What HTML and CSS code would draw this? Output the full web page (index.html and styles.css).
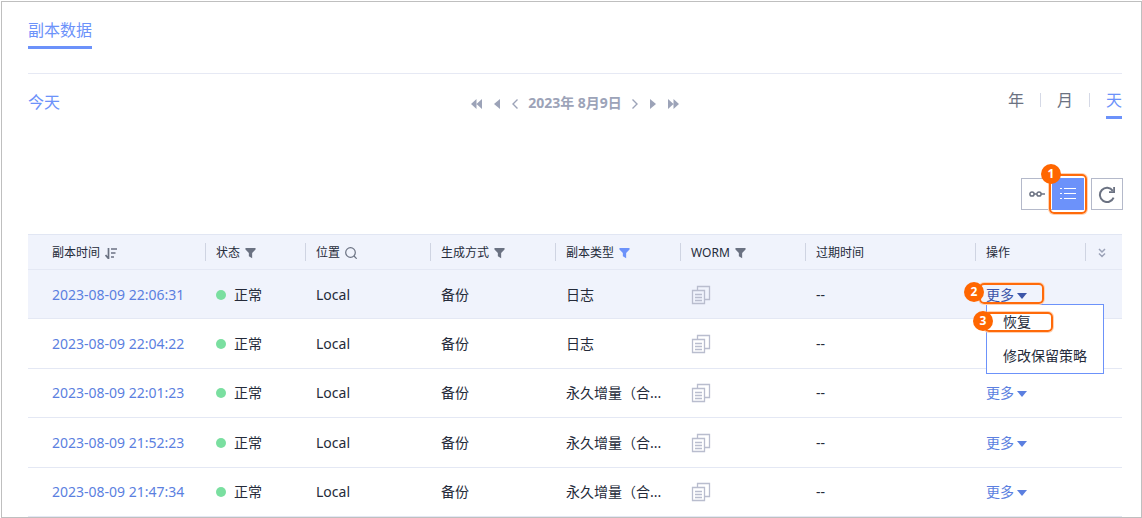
FILE: index.html
```html
<!DOCTYPE html>
<html lang="zh-CN">
<head>
<meta charset="utf-8">
<title>副本数据</title>
<meta name="viewport" content="width=device-width, initial-scale=1">
<link rel="stylesheet" href="styles.css">
</head>
<body>
<svg class="defs" width="0" height="0" aria-hidden="true">
  <symbol id="funnel" viewBox="0 0 12 12"><path d="M0.5 0.5h11v1.6L7.8 6v5.6L4.2 9.6V6L0.5 2.100z" fill="currentColor"/></symbol>
  <symbol id="copy" viewBox="0 0 20 20"><g fill="none" stroke="currentColor" stroke-width="1.3"><path d="M6.500 5.500V1.500h12v13h-5"/><path d="M1.500 5.500h12v13h-12z"/><path d="M4 9.500h7M4 12.500h7M4 15.500h7"/></g></symbol>
  <symbol id="caret" viewBox="0 0 10 6"><path d="M0 0h10L5 6z" fill="currentColor"/></symbol>
</svg>
<main class="page">
  <nav class="tabs"><a class="tab" href="#copies">副本数据</a></nav>

  <div class="calendar">
    <a class="today" href="#today">今天</a>
    <div class="datenav">
      <button class="step" aria-label="上一年"><svg width="11" height="10" viewBox="0 0 11 10"><path d="M5.500 0v10L0 5zM11 0v10L5.500 5z" fill="currentColor"/></svg></button>
      <button class="step" aria-label="上一月"><svg width="6" height="10" viewBox="0 0 6 10"><path d="M6 0v10L0 5z" fill="currentColor"/></svg></button>
      <button class="step" aria-label="前一天"><svg width="6" height="10" viewBox="0 0 6 10"><path d="M5.500 0.500L1 5l4.500 4.500" fill="none" stroke="currentColor" stroke-width="1.400"/></svg></button>
      <span class="date">2023年 8月9日</span>
      <button class="step" aria-label="后一天"><svg width="6" height="10" viewBox="0 0 6 10"><path d="M0.500 0.500L5 5 0.500 9.500" fill="none" stroke="currentColor" stroke-width="1.400"/></svg></button>
      <button class="step" aria-label="下一月"><svg width="6" height="10" viewBox="0 0 6 10"><path d="M0 0v10l6-5z" fill="currentColor"/></svg></button>
      <button class="step" aria-label="下一年"><svg width="11" height="10" viewBox="0 0 11 10"><path d="M0 0v10l5.500-5zM5.500 0v10L11 5z" fill="currentColor"/></svg></button>
    </div>
    <div class="range">
      <button class="unit">年</button>
      <button class="unit">月</button>
      <button class="unit unit-on">天</button>
    </div>
  </div>

  <div class="tools">
    <button class="tool tool-line" aria-label="时间轴视图"><svg width="16" height="8" viewBox="0 0 16 8"><g fill="none" stroke="#6b7282" stroke-width="1.500"><circle cx="3" cy="4" r="2.100"/><circle cx="10" cy="4" r="2.100"/><path d="M5.100 4h2.800M12.100 4H16"/></g></svg></button>
    <div class="mark-host">
      <button class="tool tool-on" aria-label="列表视图"><svg width="16" height="14" viewBox="0 0 16 14"><path d="M0 1.500h2M4 1.500h12M0 6.500h2M4 6.500h12M0 11.500h2M4 11.500h12" stroke="#fff" stroke-width="1.200"/></svg></button>
      <span class="ring ring-tool"></span><span class="badge badge-tool">1</span>
    </div>
    <button class="tool tool-refresh" aria-label="刷新"><svg width="18" height="18" viewBox="0 0 18 18"><path d="M14.800 5.800A7.100 7.100 0 1 0 15.600 12.600" fill="none" stroke="#6b7282" stroke-width="2"/><path d="M16.100 2v5.200H11" fill="none" stroke="#6b7282" stroke-width="1.800"/></svg></button>
  </div>

  <table class="grid" id="copies">
    <colgroup><col class="c-time"><col class="c-state"><col class="c-mid"><col class="c-mid"><col class="c-mid"><col class="c-mid"><col><col class="c-act"><col class="c-more"></colgroup>
    <thead>
      <tr>
        <th><div class="head">副本时间<svg width="12" height="12" viewBox="0 0 12 12"><g fill="none" stroke="currentColor"><path d="M3.500 1v11M0.500 8L3.500 11.500" stroke-width="1.700"/><path d="M6 2h6M6 6h4.500M6 10h3" stroke-width="1.700"/></g></svg></div></th>
        <th><div class="head">状态<svg width="11" height="12"><use href="#funnel"/></svg></div></th>
        <th><div class="head">位置<svg width="12" height="12" viewBox="0 0 12 12"><g fill="none" stroke="currentColor" stroke-width="1.200"><circle cx="5.500" cy="5.500" r="4.800"/><path d="M9 9l2.700 2.700"/></g></svg></div></th>
        <th><div class="head">生成方式<svg width="11" height="12"><use href="#funnel"/></svg></div></th>
        <th><div class="head">副本类型<svg class="active" width="11" height="12"><use href="#funnel"/></svg></div></th>
        <th><div class="head">WORM<svg width="11" height="12"><use href="#funnel"/></svg></div></th>
        <th><div class="head">过期时间</div></th>
        <th><div class="head">操作</div></th>
        <th><div class="head head-end"><button class="expand" aria-label="自定义列"><svg width="8" height="10" viewBox="0 0 8 10"><path d="M1 1l3 3 3-3M1 5.500l3 3 3-3" fill="none" stroke="currentColor" stroke-width="1.500"/></svg></button></div></th>
      </tr>
    </thead>
    <tbody>
      <tr class="hover">
        <td><a href="#r1">2023-08-09 22:06:31</a></td><td><span class="state">正常</span></td><td>Local</td><td>备份</td><td>日志</td>
        <td><svg class="copy" width="20" height="20"><use href="#copy"/></svg></td><td>--</td>
        <td class="actions"><div class="mark-host"><button class="more more-open">更多<svg width="10" height="6"><use href="#caret"/></svg></button>
          <div class="menu">
            <button class="item">恢复</button>
            <button class="item">修改保留策略</button>
            <span class="ring ring-item"></span><span class="badge badge-item">3</span>
          </div>
          <span class="ring ring-more"></span><span class="badge badge-more">2</span></div></td><td></td>
      </tr>
      <tr>
        <td><a href="#r2">2023-08-09 22:04:22</a></td><td><span class="state">正常</span></td><td>Local</td><td>备份</td><td>日志</td>
        <td><svg class="copy" width="20" height="20"><use href="#copy"/></svg></td><td>--</td>
        <td></td><td></td>
      </tr>
      <tr>
        <td><a href="#r3">2023-08-09 22:01:23</a></td><td><span class="state">正常</span></td><td>Local</td><td>备份</td><td>永久增量（合...</td>
        <td><svg class="copy" width="20" height="20"><use href="#copy"/></svg></td><td>--</td>
        <td><button class="more">更多<svg width="10" height="6"><use href="#caret"/></svg></button></td><td></td>
      </tr>
      <tr>
        <td><a href="#r4">2023-08-09 21:52:23</a></td><td><span class="state">正常</span></td><td>Local</td><td>备份</td><td>永久增量（合...</td>
        <td><svg class="copy" width="20" height="20"><use href="#copy"/></svg></td><td>--</td>
        <td><button class="more">更多<svg width="10" height="6"><use href="#caret"/></svg></button></td><td></td>
      </tr>
      <tr>
        <td><a href="#r5">2023-08-09 21:47:34</a></td><td><span class="state">正常</span></td><td>Local</td><td>备份</td><td>永久增量（合...</td>
        <td><svg class="copy" width="20" height="20"><use href="#copy"/></svg></td><td>--</td>
        <td><button class="more">更多<svg width="10" height="6"><use href="#caret"/></svg></button></td><td></td>
      </tr>
    </tbody>
  </table>
</main>
</body>
</html>
```

FILE: styles.css
```css
* { box-sizing: border-box; }
body {
  margin: 0;
  padding: 1px 0 0 1px;
  background: #fff;
  color: #252b3a;
  font: 14px/20px "Noto Sans", "Noto Sans CJK SC", sans-serif;
}
button {
  margin: 0;
  padding: 0;
  border: 0;
  background: none;
  color: inherit;
  font: inherit;
  cursor: pointer;
}
a { color: #5b7fe0; text-decoration: none; }
svg { display: block; flex: none; }
.defs { position: absolute; }

.page {
  border: 1px solid #bfbfbf;
  padding: 16px 19px 0 26px;
}
.tabs {
  display: flex;
  padding-bottom: 24px;
  border-bottom: 1px solid #e6e9f4;
}
.tab {
  padding-bottom: 4px;
  border-bottom: 3px solid #6c92fa;
  color: #6c92fa;
  font-size: 16px;
  line-height: 24px;
}

.calendar {
  display: grid;
  grid-template-columns: 1fr auto 1fr;
  align-items: start;
  padding-top: 14px;
}
.today {
  padding-top: 2px;
  color: #6c92fa;
  font-size: 16px;
  line-height: 24px;
}
.datenav {
  display: flex;
  align-items: center;
  gap: 12px;
  padding-top: 5px;
  color: #9ca3b8;
}
.step { padding-top: 2px; }
.date { font-weight: 700; margin: 0 -2px; }
.range { display: flex; justify-content: flex-end; }
.unit {
  position: relative;
  margin-left: 33px;
  padding-bottom: 4px;
  border-bottom: 3px solid transparent;
  color: #6b7282;
  font-size: 16px;
  line-height: 24px;
}
.unit + .unit::before {
  content: "";
  position: absolute;
  left: -17px;
  top: 5px;
  width: 1px;
  height: 14px;
  background: #d5d9e6;
}
.unit-on { border-color: #6c92fa; color: #6c92fa; }

.tools {
  display: flex;
  justify-content: flex-end;
  margin-right: -1px;
  padding: 59px 0 24px;
}
.tool {
  display: flex;
  align-items: center;
  justify-content: center;
  width: 32px;
  height: 32px;
  border: 1px solid #b4b9ca;
  background: #fff;
}
.tool-line { margin-right: -1px; }
.tool-on { border-color: #6c92fa; background: #6c92fa; }
.tool-refresh { margin-left: 7px; }

.grid {
  width: 100%;
  height: 283px;
  border-collapse: separate;
  border-spacing: 0;
  table-layout: fixed;
}
.c-time { width: 177px; }
.c-state { width: 100px; }
.c-mid { width: 125px; }
.c-act { width: 110px; }
.c-more { width: 37px; }
th, td { padding: 0; text-align: left; border-bottom: 1px solid #e4e8f4; }
th {
  height: 36px;
  border-top: 1px solid #e1e6f3;
  background: #f0f3fc;
  font-size: 12px;
  font-weight: 400;
}
td { padding: 1px 0 0 11px; white-space: nowrap; }
td:first-child { padding-left: 24px; }
.head {
  display: flex;
  align-items: center;
  gap: 5px;
  height: 18px;
  padding: 2px 0 0 10px;
  border-left: 1px solid #cfd4e2;
}
th:first-child .head { padding-left: 24px; border-left: 0; }
.head svg { color: #6b7282; }
.head .active { color: #6c92fa; }
.head .expand svg { color: #9ca3b8; }
.head-end { padding-left: 12px; }
.hover td { background: #f0f3fc; }

.state { display: flex; align-items: center; gap: 8px; }
.state::before {
  content: "";
  width: 10px;
  height: 10px;
  border-radius: 50%;
  background: #7adfa0;
}
.copy { color: #b9bdce; }
.more {
  display: flex;
  align-items: center;
  gap: 3px;
  color: #5b7fe0;
}
.more svg { margin-top: 2px; }
.more-open { color: #3c55a8; }
.mark-host { position: relative; }

.menu {
  position: absolute;
  z-index: 1;
  left: 0;
  top: 19px;
  width: 118px;
  border: 1px solid #6c92fa;
  background: #fff;
}
.item {
  display: block;
  width: 100%;
  padding: 7px 16px;
  text-align: left;
}

.ring {
  position: absolute;
  z-index: 2;
  border: 2px solid #ff6a0a;
  border-radius: 5px;
  box-shadow: 0 0 0 1px #ffd2b3;
  pointer-events: none;
}
.badge {
  position: absolute;
  z-index: 3;
  width: 20px;
  height: 20px;
  border-radius: 50%;
  background: #ff6600;
  color: #fff;
  font-size: 12px;
  font-weight: 700;
  text-align: center;
}
.ring-tool { left: -3px; top: -4px; width: 38px; height: 40px; }
.badge-tool { left: -11px; top: -14px; }
.ring-more { left: -7px; top: -2px; width: 65px; height: 21px; }
.badge-more { left: -22px; top: -3px; }
.ring-item { left: -3px; top: 7px; width: 69px; height: 20px; }
.badge-item { left: -14px; top: 6px; }
```
